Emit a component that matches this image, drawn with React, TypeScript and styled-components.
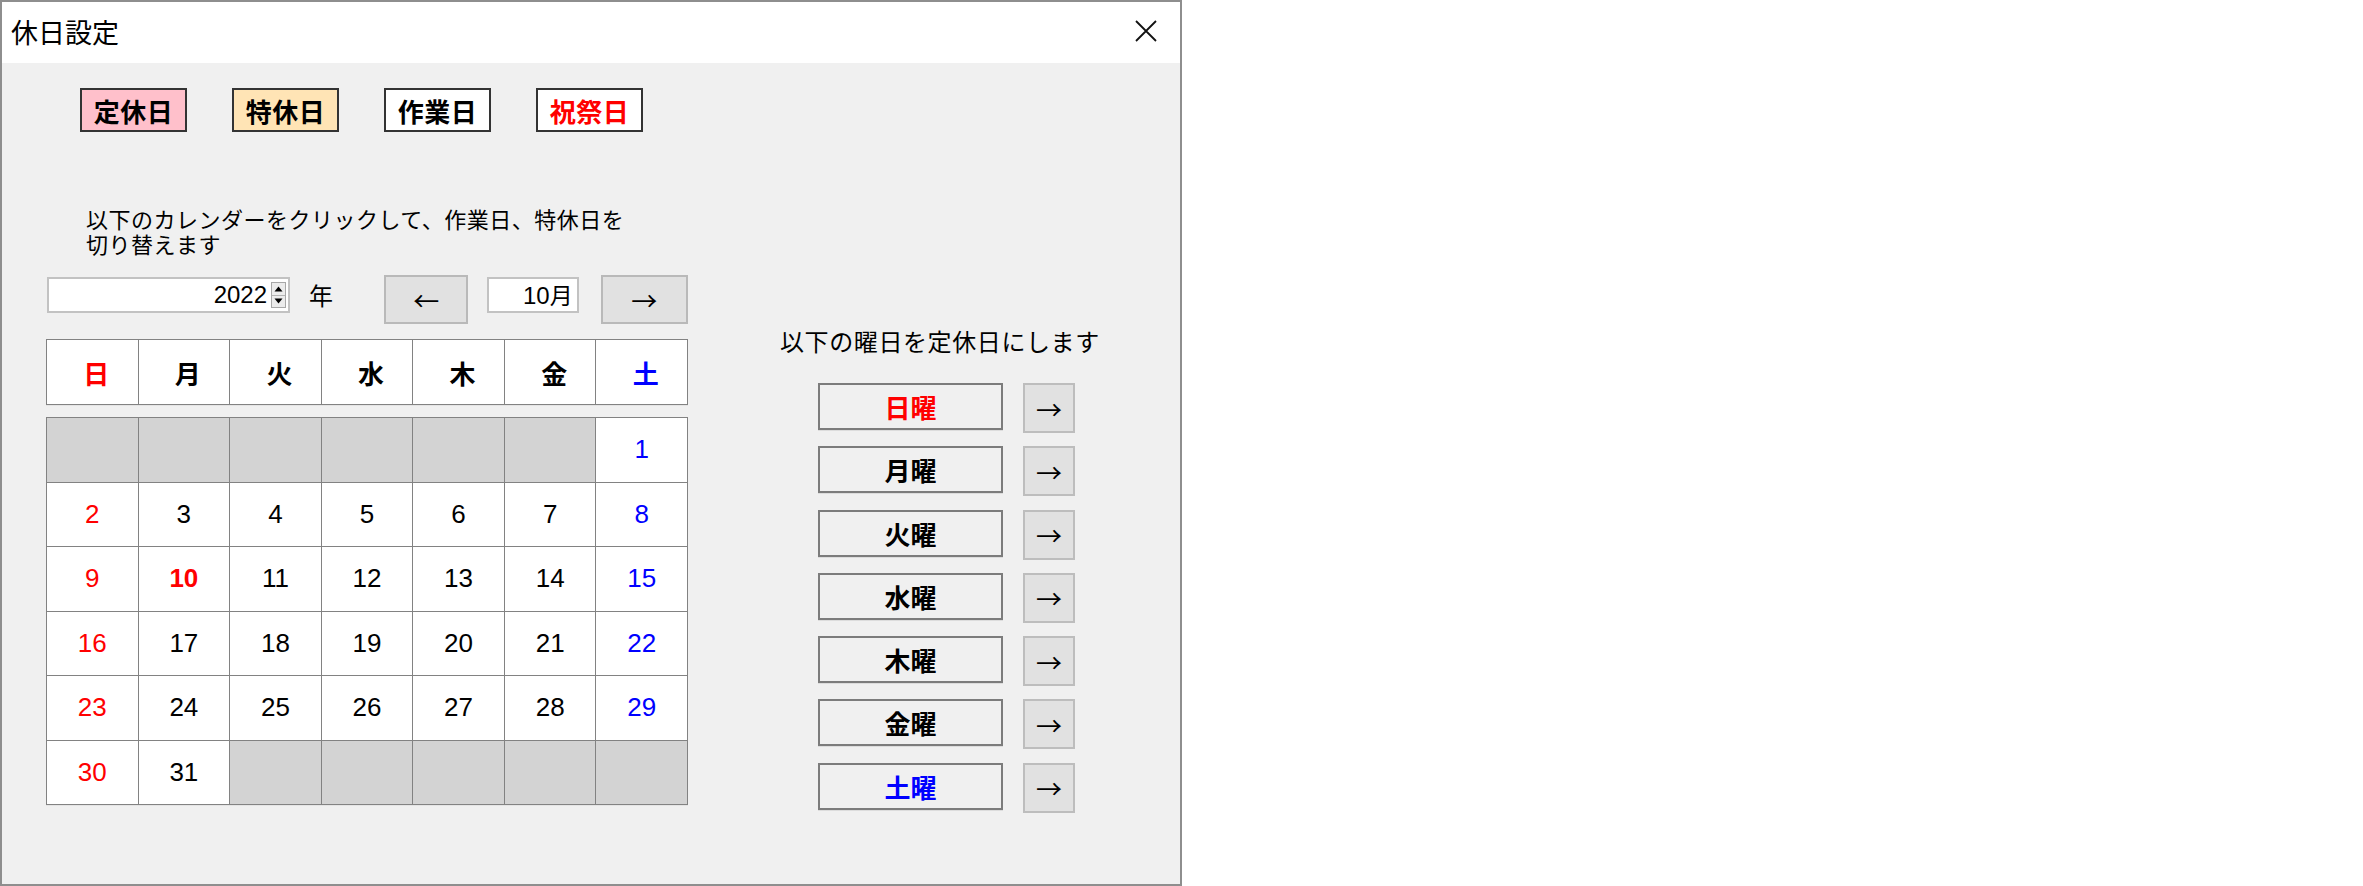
import React from "react";
import styled, { createGlobalStyle } from "styled-components";

const GlobalStyle = createGlobalStyle`
  html, body { margin: 0; padding: 0; background: #ffffff; }
  body { font-family: "Noto Sans CJK JP", "Noto Sans", sans-serif; color: #000; }
  * { box-sizing: border-box; }
`;

const CJK = `"Noto Sans CJK JP", "Noto Sans", sans-serif`;
const NUM = `"Liberation Sans", "Noto Sans CJK JP", sans-serif`;

const Window = styled.div`
  width: 1182px;
  height: 886px;
  border: 2px solid #8e8e8e;
  display: flex;
  flex-direction: column;
  background: #f0f0f0;
`;

const TitleBar = styled.div`
  height: 61px;
  background: #ffffff;
  display: flex;
  align-items: center;
  justify-content: space-between;
  padding: 0 23px 0 9px;
`;

const Title = styled.div`
  font-family: ${CJK};
  font-size: 27px;
  line-height: 30px;
  font-weight: 400;
  margin-top: -2px;
`;

const CloseButton = styled.div`
  width: 22px;
  height: 22px;
  display: flex;
  margin-top: -3px;
`;

const Content = styled.div`
  flex: 1;
  display: flex;
  gap: 92px;
  padding: 25px 0 0 44px;
`;

const LeftColumn = styled.div`
  width: 642px;
  display: flex;
  flex-direction: column;
`;

const LegendRow = styled.div`
  display: flex;
  gap: 45px;
  margin-left: 34px;
`;

const LegendBox = styled.div<{ $bg: string; $fg: string }>`
  width: 107px;
  height: 44px;
  border: 2px solid #333333;
  background: ${(p) => p.$bg};
  color: ${(p) => p.$fg};
  font-family: ${CJK};
  font-weight: 700;
  font-size: 26px;
  letter-spacing: 0.5px;
  display: flex;
  align-items: center;
  justify-content: center;
`;

const Instruction = styled.div`
  margin-top: 73px;
  margin-left: 40px;
  display: flex;
  flex-direction: column;
`;

const InstructionLine = styled.div`
  height: 25px;
  display: flex;
  align-items: center;
  font-family: ${CJK};
  font-size: 22px;
  line-height: 22px;
  letter-spacing: 0.5px;
  white-space: nowrap;
`;

const ControlRow = styled.div`
  margin-top: 20px;
  margin-left: 1px;
  display: flex;
  align-items: flex-start;
`;

const TextBox = styled.div<{ $w: number; $ml: number }>`
  width: ${(p) => p.$w}px;
  height: 36px;
  margin-top: 2px;
  margin-left: ${(p) => p.$ml}px;
  background: #ffffff;
  border: 2px solid #c2c2c2;
  display: flex;
  align-items: center;
  justify-content: flex-end;
`;

const BoxValue = styled.span`
  font-family: ${NUM};
  font-size: 24px;
  line-height: 30px;
  padding-right: 4px;
`;

const MonthSuffix = styled.span`
  font-family: ${CJK};
  font-size: 23px;
`;

const Spinner = styled.div`
  width: 15px;
  height: 26px;
  margin-right: 2px;
  border: 1px solid #a8a8a8;
  background: #ececec;
  display: flex;
  flex-direction: column;
`;

const SpinHalf = styled.div`
  flex: 1;
  display: flex;
  align-items: center;
  justify-content: center;
  & + & { border-top: 1px solid #b4b4b4; }
`;

const YearLabel = styled.div`
  width: 24px;
  margin-left: 19px;
  margin-top: 2px;
  height: 36px;
  line-height: 36px;
  font-family: ${CJK};
  font-size: 24px;
`;

const NavButton = styled.div<{ $w: number; $ml: number }>`
  width: ${(p) => p.$w}px;
  height: 49px;
  margin-left: ${(p) => p.$ml}px;
  background: #e1e1e1;
  border: 2px solid #b9b9b9;
  display: flex;
  align-items: center;
  justify-content: center;
  font-family: ${CJK};
  font-size: 26px;
`;

const CalendarGrid = styled.div<{ $rows: number; $h: number; $mt: number }>`
  margin-top: ${(p) => p.$mt}px;
  height: ${(p) => p.$h}px;
  display: grid;
  grid-template-columns: repeat(7, 1fr);
  grid-template-rows: repeat(${(p) => p.$rows}, 1fr);
  gap: 1px;
  background: #828282;
  border: 1px solid #828282;
  box-shadow: 0 1px 0 #e4e4e4;
`;

const HeaderCell = styled.div<{ $color: string }>`
  background: #ffffff;
  color: ${(p) => p.$color};
  font-family: ${CJK};
  font-weight: 700;
  font-size: 26px;
  display: flex;
  align-items: center;
  justify-content: center;
  padding-left: 8px;
`;

const DayCell = styled.div<{ $empty: boolean; $color: string; $bold: boolean }>`
  background: ${(p) => (p.$empty ? "#d3d3d3" : "#ffffff")};
  color: ${(p) => p.$color};
  font-family: ${NUM};
  font-weight: ${(p) => (p.$bold ? 700 : 400)};
  font-size: 26px;
  display: flex;
  align-items: center;
  justify-content: center;
`;

const RightColumn = styled.div`
  display: flex;
  flex-direction: column;
  margin-top: 239px;
`;

const RightText = styled.div`
  font-family: ${CJK};
  font-size: 24px;
  line-height: 28px;
  letter-spacing: 0.6px;
`;

const WeekdayList = styled.div`
  margin-top: 28px;
  margin-left: 38px;
  display: flex;
  flex-direction: column;
  gap: 13.3px;
`;

const WeekdayRow = styled.div`
  display: flex;
  gap: 20px;
  align-items: flex-start;
`;

const WeekdayButton = styled.div<{ $color: string }>`
  width: 185px;
  height: 47px;
  border: 2px solid #7c7c7c;
  box-shadow: 0 1px 0 #dcdcdc;
  background: #f0f0f0;
  color: ${(p) => p.$color};
  font-family: ${CJK};
  font-weight: 700;
  font-size: 26px;
  display: flex;
  align-items: center;
  justify-content: center;
`;

const ArrowButton = styled.div`
  width: 52px;
  height: 50px;
  background: #e1e1e1;
  border: 2px solid #bdbdbd;
  display: flex;
  align-items: center;
  justify-content: center;
  font-family: ${CJK};
  font-size: 26px;
`;

const RED = "#ff0000";
const BLUE = "#0000ff";
const BLACK = "#000000";

const legends = [
  { label: "定休日", bg: "#ffc0cb", fg: BLACK },
  { label: "特休日", bg: "#ffe4b5", fg: BLACK },
  { label: "作業日", bg: "#ffffff", fg: BLACK },
  { label: "祝祭日", bg: "#ffffff", fg: RED },
];

const weekHeaders = ["日", "月", "火", "水", "木", "金", "土"];
const colColor = (i: number) => (i === 0 ? RED : i === 6 ? BLUE : BLACK);

const days: (number | null)[] = [
  null, null, null, null, null, null, 1,
  2, 3, 4, 5, 6, 7, 8,
  9, 10, 11, 12, 13, 14, 15,
  16, 17, 18, 19, 20, 21, 22,
  23, 24, 25, 26, 27, 28, 29,
  30, 31, null, null, null, null, null,
];
const holidays = new Set([10]);

const CloseIcon = () => (
  <svg width="22" height="22" viewBox="0 0 22 22">
    <path d="M1 1 L21 21 M21 1 L1 21" stroke="#111" strokeWidth="1.8" fill="none" />
  </svg>
);

const Tri = ({ up }: { up: boolean }) => (
  <svg width="9" height="6" viewBox="0 0 9 6">
    <path d={up ? "M0.5 5.5 L4.5 0.5 L8.5 5.5 Z" : "M0.5 0.5 L4.5 5.5 L8.5 0.5 Z"} fill="#000" />
  </svg>
);

export default function App() {
  return (
    <>
      <GlobalStyle />
      <Window>
        <TitleBar>
          <Title>休日設定</Title>
          <CloseButton>
            <CloseIcon />
          </CloseButton>
        </TitleBar>
        <Content>
          <LeftColumn>
            <LegendRow>
              {legends.map((l) => (
                <LegendBox key={l.label} $bg={l.bg} $fg={l.fg}>
                  {l.label}
                </LegendBox>
              ))}
            </LegendRow>
            <Instruction>
              <InstructionLine>以下のカレンダーをクリックして、作業日、特休日を</InstructionLine>
              <InstructionLine>切り替えます</InstructionLine>
            </Instruction>
            <ControlRow>
              <TextBox $w={245} $ml={0}>
                <BoxValue>2022</BoxValue>
                <Spinner>
                  <SpinHalf>
                    <Tri up />
                  </SpinHalf>
                  <SpinHalf>
                    <Tri up={false} />
                  </SpinHalf>
                </Spinner>
              </TextBox>
              <YearLabel>年</YearLabel>
              <NavButton $w={85} $ml={51}>←</NavButton>
              <TextBox $w={92} $ml={19}>
                <BoxValue>
                  10<MonthSuffix>月</MonthSuffix>
                </BoxValue>
              </TextBox>
              <NavButton $w={88} $ml={22}>→</NavButton>
            </ControlRow>
            <CalendarGrid $rows={1} $h={66} $mt={15}>
              {weekHeaders.map((w, i) => (
                <HeaderCell key={w} $color={colColor(i)}>
                  {w}
                </HeaderCell>
              ))}
            </CalendarGrid>
            <CalendarGrid $rows={6} $h={388} $mt={12}>
              {days.map((d, i) => {
                const col = i % 7;
                const isHoliday = d !== null && holidays.has(d);
                return (
                  <DayCell
                    key={i}
                    $empty={d === null}
                    $color={isHoliday ? RED : colColor(col)}
                    $bold={isHoliday}
                  >
                    {d ?? ""}
                  </DayCell>
                );
              })}
            </CalendarGrid>
          </LeftColumn>
          <RightColumn>
            <RightText>以下の曜日を定休日にします</RightText>
            <WeekdayList>
              {weekHeaders.map((w, i) => (
                <WeekdayRow key={w}>
                  <WeekdayButton $color={colColor(i)}>{w}曜</WeekdayButton>
                  <ArrowButton>→</ArrowButton>
                </WeekdayRow>
              ))}
            </WeekdayList>
          </RightColumn>
        </Content>
      </Window>
    </>
  );
}
